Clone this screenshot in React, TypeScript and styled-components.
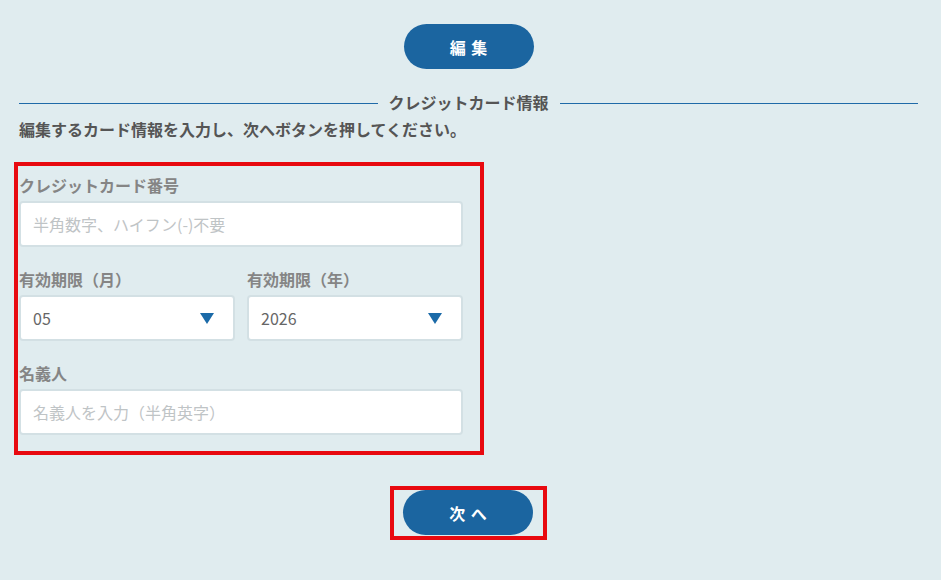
import styled, { createGlobalStyle } from 'styled-components'

const GlobalStyle = createGlobalStyle`
  html, body { margin: 0; padding: 0; background: #e0ecef; }
  body {
    font-family: "Noto Sans CJK JP", "Noto Sans", "Liberation Sans", sans-serif;
    color: #555;
  }
  * { box-sizing: border-box; }
`

const Page = styled.div`
  padding: 24px 23px 40px 19px;
  display: flex;
  flex-direction: column;
`

const PillButton = styled.button`
  width: 130px;
  height: 45px;
  border: none;
  border-radius: 23px;
  background: #1b65a0;
  color: #fff;
  font-family: inherit;
  font-size: 16px;
  font-weight: 700;
  letter-spacing: 0.35em;
  text-indent: 0.35em;
  cursor: pointer;
  display: grid;
  place-items: center;
`

const TopAction = styled.div`
  display: flex;
  justify-content: center;
  margin-bottom: 21px;
`

const SectionTitle = styled.div`
  display: flex;
  align-items: center;
  gap: 11px;
  height: 24px;
  font-size: 16px;
  font-weight: 700;
  color: #555;
  line-height: 24px;

  &::before, &::after {
    content: "";
    flex: 1;
    height: 1px;
    background: #1f6aa8;
    margin-top: 2px;
  }
`

const Lead = styled.p`
  margin: 3px 0 21px;
  font-size: 16px;
  font-weight: 700;
  line-height: 24px;
  color: #555;
`

const Highlight = styled.div<{ $pad: string }>`
  border: 4px solid #e8090f;
  padding: ${({ $pad }) => $pad};
`

const FormBox = styled(Highlight)`
  width: 470px;
  margin-left: -5px;
  display: flex;
  flex-direction: column;
  gap: 20px;
`

const Field = styled.div`
  display: flex;
  flex-direction: column;
  gap: 4px;
  min-width: 0;
`

const Label = styled.label`
  font-size: 16px;
  font-weight: 700;
  line-height: 24px;
  color: #858585;
`

const fieldBase = `
  width: 100%;
  height: 46px;
  border: 2px solid #d3e0e4;
  border-radius: 4px;
  background: #fff;
  padding: 0 12px;
  font-family: inherit;
  font-size: 16px;
  color: #666;
  outline: none;
`

const TextInput = styled.input`
  ${fieldBase}
  &::placeholder { color: #bfc4c6; }
`

const Row = styled.div`
  display: grid;
  grid-template-columns: 1fr 1fr;
  gap: 12px;
`

const SelectWrap = styled.div`
  position: relative;
`

const Select = styled.select`
  ${fieldBase}
  appearance: none;
  -webkit-appearance: none;
  cursor: pointer;
`

const Caret = styled.span`
  position: absolute;
  right: 21px;
  top: 18px;
  width: 0;
  height: 0;
  border-left: 7.5px solid transparent;
  border-right: 7.5px solid transparent;
  border-top: 11px solid #1b6aa8;
  pointer-events: none;
`

const BottomAction = styled.div`
  display: flex;
  justify-content: center;
  margin-top: 31px;
`

const months = Array.from({ length: 12 }, (_, i) => String(i + 1).padStart(2, '0'))
const years = Array.from({ length: 11 }, (_, i) => String(2025 + i))

export default function App() {
  return (
    <>
      <GlobalStyle />
      <Page>
        <TopAction>
          <PillButton type="button">編集</PillButton>
        </TopAction>

        <SectionTitle>クレジットカード情報</SectionTitle>
        <Lead>編集するカード情報を入力し、次へボタンを押してください。</Lead>

        <FormBox $pad="7px 17px 16px 1px">
          <Field>
            <Label htmlFor="card-no">クレジットカード番号</Label>
            <TextInput id="card-no" placeholder="半角数字、ハイフン(-)不要" />
          </Field>

          <Row>
            <Field>
              <Label htmlFor="exp-m">有効期限（月）</Label>
              <SelectWrap>
                <Select id="exp-m" defaultValue="05">
                  {months.map((m) => (
                    <option key={m} value={m}>{m}</option>
                  ))}
                </Select>
                <Caret />
              </SelectWrap>
            </Field>
            <Field>
              <Label htmlFor="exp-y">有効期限（年）</Label>
              <SelectWrap>
                <Select id="exp-y" defaultValue="2026">
                  {years.map((y) => (
                    <option key={y} value={y}>{y}</option>
                  ))}
                </Select>
                <Caret />
              </SelectWrap>
            </Field>
          </Row>

          <Field>
            <Label htmlFor="holder">名義人</Label>
            <TextInput id="holder" placeholder="名義人を入力（半角英字）" />
          </Field>
        </FormBox>

        <BottomAction>
          <Highlight $pad="0 10px 1px 9px">
            <PillButton type="button">次へ</PillButton>
          </Highlight>
        </BottomAction>
      </Page>
    </>
  )
}
